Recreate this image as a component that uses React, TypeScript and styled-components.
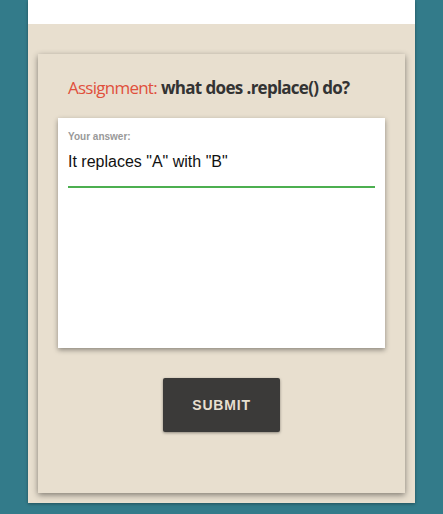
import React from "react";
import styled, { createGlobalStyle } from "styled-components";

const Global = createGlobalStyle`
  html, body { margin: 0; padding: 0; }
  body { background: #337b8a; width: 443px; height: 514px; overflow: hidden; }
`;

const Page = styled.div`
  width: 387px;
  margin-left: 28px;
  background: #e8dfcf;
  box-shadow: 0 1px 3px rgba(0,0,0,0.35);
  padding-bottom: 10px;
`;

const TopStrip = styled.div`
  height: 24px;
  background: #ffffff;
`;

const Card = styled.div`
  margin: 30px 10px 0 10px;
  background: #e8dfcf;
  box-shadow: 0 2px 6px rgba(0,0,0,0.45);
  padding: 22px 20px 61px 20px;
  display: flex;
  flex-direction: column;
  align-items: stretch;
`;

const Title = styled.h2`
  margin: 0 0 18px 10px;
  font-family: "Open Sans", sans-serif;
  font-size: 17px;
  line-height: 24px;
  font-weight: 700;
  color: #333333;
  letter-spacing: -0.75px;
  word-spacing: 0.5px;
`;

const Label = styled.span`
  color: #e0503c;
  font-weight: 400;
`;

const AnswerBox = styled.div`
  background: #ffffff;
  height: 230px;
  box-shadow: 0 2px 5px rgba(0,0,0,0.4);
  padding: 13px 10px 0 10px;
  box-sizing: border-box;
  display: flex;
  flex-direction: column;
`;

const FieldLabel = styled.label`
  font-family: "Liberation Sans", Arial, sans-serif;
  font-size: 10px;
  font-weight: 700;
  color: #999999;
  line-height: 11px;
`;

const Input = styled.input`
  font-family: "Liberation Sans", Arial, sans-serif;
  font-size: 16px;
  color: #111;
  border: none;
  border-bottom: 2px solid #4caf50;
  outline: none;
  padding: 11px 0 15px 0;
  background: transparent;
`;

const ButtonRow = styled.div`
  display: flex;
  justify-content: center;
  margin-top: 30px;
`;

const SubmitButton = styled.button`
  width: 117px;
  height: 54px;
  background: #3b3a39;
  color: #e8dfcf;
  border: none;
  border-radius: 2px;
  box-shadow: 0 1px 3px rgba(0,0,0,0.4);
  font-family: "Liberation Sans", Arial, sans-serif;
  font-weight: 700;
  font-size: 14px;
  letter-spacing: 0.8px;
`;

export default function App() {
  return (
    <>
      <Global />
      <Page>
        <TopStrip />
        <Card>
          <Title>
            <Label>Assignment:</Label> what does .replace() do?
          </Title>
          <AnswerBox>
            <FieldLabel>Your answer:</FieldLabel>
            <Input defaultValue={'It replaces "A" with "B"'} />
          </AnswerBox>
          <ButtonRow>
            <SubmitButton>SUBMIT</SubmitButton>
          </ButtonRow>
        </Card>
      </Page>
    </>
  );
}
